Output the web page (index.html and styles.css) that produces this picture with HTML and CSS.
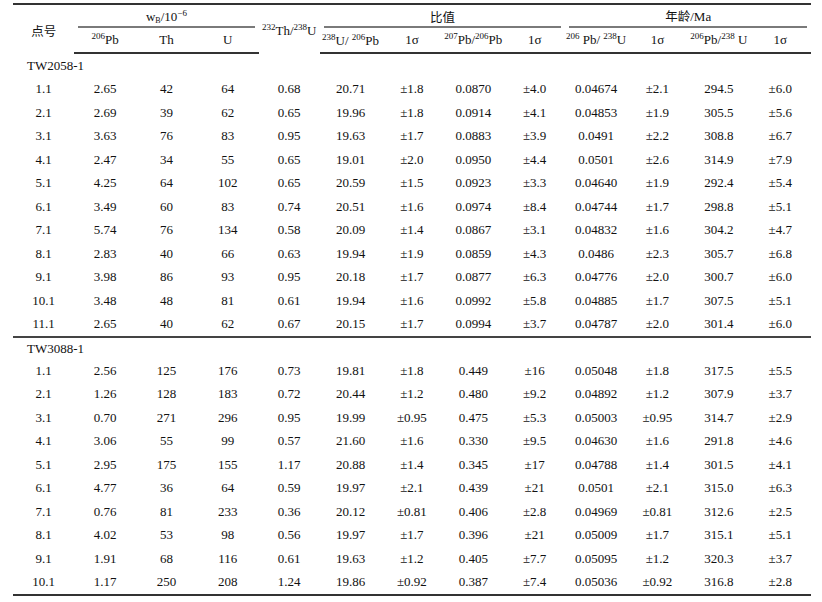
FILE: index.html
```html
<!DOCTYPE html>
<html lang="zh">
<head>
<meta charset="utf-8">
<title>锆石 U-Pb 数据</title>
<link rel="stylesheet" href="styles.css">
</head>
<body>
<div class="wrap">
<table class="data">
<colgroup>
<col><col><col><col><col><col><col><col><col><col><col><col><col>
</colgroup>
<thead>
<tr class="h1">
<th rowspan="2" class="cjk">点号</th>
<th colspan="3" class="grp"><div>w<sub>B</sub>/10<sup>−6</sup></div></th>
<th rowspan="2" class="mid"><sup>232</sup>Th/<sup>238</sup>U</th>
<th colspan="4" class="grp"><div class="cjk">比值</div></th>
<th colspan="4" class="grp"><div><span class="cjk">年龄</span>/Ma</div></th>
</tr>
<tr class="h2">
<th><sup>206</sup>Pb</th>
<th>Th</th>
<th>U</th>
<th class="low"><sup>238</sup>U/ <sup>206</sup>Pb</th>
<th>1σ</th>
<th><sup>207</sup>Pb/<sup>206</sup>Pb</th>
<th>1σ</th>
<th><sup>206</sup> Pb/ <sup>238</sup>U</th>
<th>1σ</th>
<th><sup>206</sup>Pb/<sup>238</sup> U</th>
<th>1σ</th>
</tr>
</thead>
<tbody>
<tr class="sec"><td colspan="13" class="label">TW2058-1</td></tr>
<tr><td>1.1</td><td>2.65</td><td>42</td><td>64</td><td>0.68</td><td>20.71</td><td>±1.8</td><td>0.0870</td><td>±4.0</td><td>0.04674</td><td>±2.1</td><td>294.5</td><td>±6.0</td></tr>
<tr><td>2.1</td><td>2.69</td><td>39</td><td>62</td><td>0.65</td><td>19.96</td><td>±1.8</td><td>0.0914</td><td>±4.1</td><td>0.04853</td><td>±1.9</td><td>305.5</td><td>±5.6</td></tr>
<tr><td>3.1</td><td>3.63</td><td>76</td><td>83</td><td>0.95</td><td>19.63</td><td>±1.7</td><td>0.0883</td><td>±3.9</td><td>0.0491</td><td>±2.2</td><td>308.8</td><td>±6.7</td></tr>
<tr><td>4.1</td><td>2.47</td><td>34</td><td>55</td><td>0.65</td><td>19.01</td><td>±2.0</td><td>0.0950</td><td>±4.4</td><td>0.0501</td><td>±2.6</td><td>314.9</td><td>±7.9</td></tr>
<tr><td>5.1</td><td>4.25</td><td>64</td><td>102</td><td>0.65</td><td>20.59</td><td>±1.5</td><td>0.0923</td><td>±3.3</td><td>0.04640</td><td>±1.9</td><td>292.4</td><td>±5.4</td></tr>
<tr><td>6.1</td><td>3.49</td><td>60</td><td>83</td><td>0.74</td><td>20.51</td><td>±1.6</td><td>0.0974</td><td>±8.4</td><td>0.04744</td><td>±1.7</td><td>298.8</td><td>±5.1</td></tr>
<tr><td>7.1</td><td>5.74</td><td>76</td><td>134</td><td>0.58</td><td>20.09</td><td>±1.4</td><td>0.0867</td><td>±3.1</td><td>0.04832</td><td>±1.6</td><td>304.2</td><td>±4.7</td></tr>
<tr><td>8.1</td><td>2.83</td><td>40</td><td>66</td><td>0.63</td><td>19.94</td><td>±1.9</td><td>0.0859</td><td>±4.3</td><td>0.0486</td><td>±2.3</td><td>305.7</td><td>±6.8</td></tr>
<tr><td>9.1</td><td>3.98</td><td>86</td><td>93</td><td>0.95</td><td>20.18</td><td>±1.7</td><td>0.0877</td><td>±6.3</td><td>0.04776</td><td>±2.0</td><td>300.7</td><td>±6.0</td></tr>
<tr><td>10.1</td><td>3.48</td><td>48</td><td>81</td><td>0.61</td><td>19.94</td><td>±1.6</td><td>0.0992</td><td>±5.8</td><td>0.04885</td><td>±1.7</td><td>307.5</td><td>±5.1</td></tr>
<tr><td>11.1</td><td>2.65</td><td>40</td><td>62</td><td>0.67</td><td>20.15</td><td>±1.7</td><td>0.0994</td><td>±3.7</td><td>0.04787</td><td>±2.0</td><td>301.4</td><td>±6.0</td></tr>
<tr class="sec split"><td colspan="13" class="label">TW3088-1</td></tr>
<tr><td>1.1</td><td>2.56</td><td>125</td><td>176</td><td>0.73</td><td>19.81</td><td>±1.8</td><td>0.449</td><td>±16</td><td>0.05048</td><td>±1.8</td><td>317.5</td><td>±5.5</td></tr>
<tr><td>2.1</td><td>1.26</td><td>128</td><td>183</td><td>0.72</td><td>20.44</td><td>±1.2</td><td>0.480</td><td>±9.2</td><td>0.04892</td><td>±1.2</td><td>307.9</td><td>±3.7</td></tr>
<tr><td>3.1</td><td>0.70</td><td>271</td><td>296</td><td>0.95</td><td>19.99</td><td>±0.95</td><td>0.475</td><td>±5.3</td><td>0.05003</td><td>±0.95</td><td>314.7</td><td>±2.9</td></tr>
<tr><td>4.1</td><td>3.06</td><td>55</td><td>99</td><td>0.57</td><td>21.60</td><td>±1.6</td><td>0.330</td><td>±9.5</td><td>0.04630</td><td>±1.6</td><td>291.8</td><td>±4.6</td></tr>
<tr><td>5.1</td><td>2.95</td><td>175</td><td>155</td><td>1.17</td><td>20.88</td><td>±1.4</td><td>0.345</td><td>±17</td><td>0.04788</td><td>±1.4</td><td>301.5</td><td>±4.1</td></tr>
<tr><td>6.1</td><td>4.77</td><td>36</td><td>64</td><td>0.59</td><td>19.97</td><td>±2.1</td><td>0.439</td><td>±21</td><td>0.0501</td><td>±2.1</td><td>315.0</td><td>±6.3</td></tr>
<tr><td>7.1</td><td>0.76</td><td>81</td><td>233</td><td>0.36</td><td>20.12</td><td>±0.81</td><td>0.406</td><td>±2.8</td><td>0.04969</td><td>±0.81</td><td>312.6</td><td>±2.5</td></tr>
<tr><td>8.1</td><td>4.02</td><td>53</td><td>98</td><td>0.56</td><td>19.97</td><td>±1.7</td><td>0.396</td><td>±21</td><td>0.05009</td><td>±1.7</td><td>315.1</td><td>±5.1</td></tr>
<tr><td>9.1</td><td>1.91</td><td>68</td><td>116</td><td>0.61</td><td>19.63</td><td>±1.2</td><td>0.405</td><td>±7.7</td><td>0.05095</td><td>±1.2</td><td>320.3</td><td>±3.7</td></tr>
<tr class="last"><td>10.1</td><td>1.17</td><td>250</td><td>208</td><td>1.24</td><td>19.86</td><td>±0.92</td><td>0.387</td><td>±7.4</td><td>0.05036</td><td>±0.92</td><td>316.8</td><td>±2.8</td></tr>
</tbody>
</table>
</div>
</body>
</html>
```
FILE: styles.css
```css
html, body {
  margin: 0;
  padding: 0;
  background: #ffffff;
}

.wrap {
  padding: 3px 0 0 13px;
}

.data {
  border-collapse: collapse;
  table-layout: fixed;
  width: 798px;
  font-family: "Liberation Serif", "Noto Sans CJK SC", serif;
  font-size: 13px;
  color: #111111;
}

.data th,
.data td {
  padding: 0;
  text-align: center;
  white-space: nowrap;
  font-weight: normal;
}

.data td {
  height: 23.5px;
  line-height: 15px;
  vertical-align: middle;
}

.cjk {
  font-family: "Noto Sans CJK SC", sans-serif;
  font-size: 12.5px;
}

.data sup {
  font-size: 9px;
  line-height: 0;
  vertical-align: 5px;
}

.data sub {
  font-size: 8px;
  line-height: 0;
  vertical-align: -2px;
}

.h1 th {
  border-top: 2px solid #333333;
  height: 23px;
}

.h1 th.grp {
  vertical-align: bottom;
}

.grp div {
  margin: 0 4px;
  padding-bottom: 1px;
  border-bottom: 2px solid #7a7a7a;
  line-height: 17px;
}

.h2 th {
  height: 22px;
  border-bottom: 2px solid #333333;
  vertical-align: middle;
}

.h1 th.mid {
  padding-top: 4px;
}

.h1 th.cjk {
  padding-top: 3px;
}

.h2 th.low {
  padding-top: 2px;
}

.sec td.label {
  text-align: left;
  padding-left: 14px;
  height: 23px;
}

.split td.label {
  height: 21px;
  border-top: 2px solid #444444;
}

.last td {
  border-bottom: 2px solid #333333;
}
```
